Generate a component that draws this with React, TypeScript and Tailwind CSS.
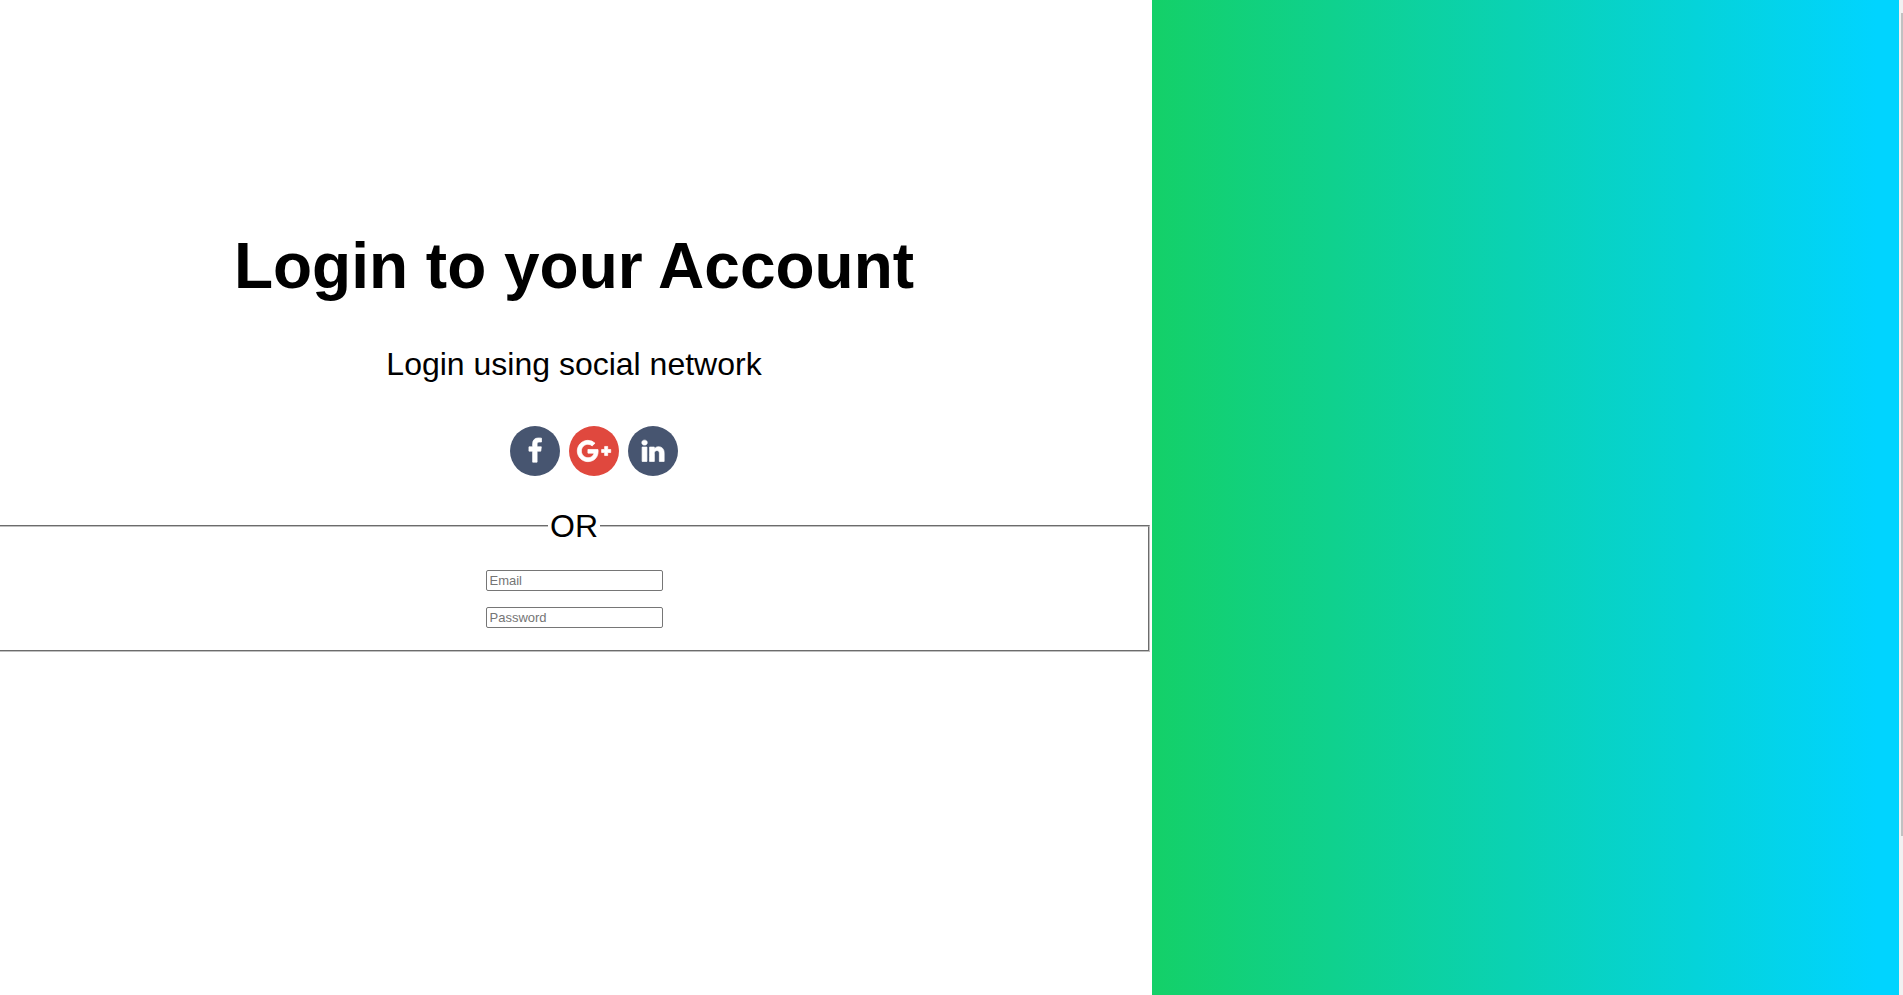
const inputClass =
  'h-[21px] w-[177px] rounded-[2px] border border-[#767676] bg-white px-[3px] text-[13px] text-black placeholder:text-[#757575]';

const socialClass = 'flex size-[50px] items-center justify-center rounded-full text-white';

const iconClass = 'h-[26px] fill-current stroke-current stroke-[50]';

function FacebookIcon() {
  return (
    <svg viewBox="0 0 1792 1792" className={`${iconClass} w-[26px] overflow-visible`} aria-hidden="true">
      <path d="M1343 12v264h-157q-86 0-116 36t-30 108v189h293l-39 296h-254v759h-306v-759h-255v-296h255v-218q0-186 104-288.5t277-102.5q147 0 228 12z" />
    </svg>
  );
}

function GooglePlusIcon() {
  return (
    <svg viewBox="0 0 2304 1792" className={`${iconClass} w-[34px] overflow-visible`} aria-hidden="true">
      <path d="M1437 913q0 208-87 370.5t-248 254-369 91.5q-149 0-285-58t-234-156-156-234-58-285 58-285 156-234 234-156 285-58q286 0 491 192l-199 191q-117-113-292-113-123 0-227.5 62t-165.5 168.5-61 232.5 61 232.5 165.5 168.5 227.5 62q83 0 152.5-23t114.5-57.5 78.5-78.5 49-83 21.5-74h-416v-252h692q12 63 12 122zm867-122v210h-209v209h-210v-209h-209v-210h209v-209h210v209h209z" />
    </svg>
  );
}

function LinkedInIcon() {
  return (
    <svg viewBox="0 0 1792 1792" className={`${iconClass} w-[26px] overflow-visible`} aria-hidden="true">
      <path d="M477 625v991h-330v-991h330zm21-306q1 73-50.5 122t-135.5 49h-2q-82 0-132-49t-50-122q0-74 51.5-122.5t134.5-48.5 133 48.5 51 122.5zm1166 729v568h-329v-530q0-105-40.5-164.5t-126.5-59.5q-63 0-105.5 34.5t-63.5 85.5q-11 30-11 81v553h-329q2-399 2-647t-1-296l-1-48h329v144h-2q20-32 41-56t56.5-52 87-43.5 114.5-15.5q171 0 275 113.5t104 332.5z" />
    </svg>
  );
}

export default function App() {
  return (
    <div className="grid min-h-screen grid-cols-[1152fr_747fr_4px] bg-white font-['Liberation_Sans',Arial,sans-serif] text-black">
      <main className="flex min-w-0 flex-col items-center pt-[229px]">
        <h1 className="pr-1 text-[64px] leading-[74px] font-bold">Login to your Account</h1>
        <p className="mt-[43px] pr-1 text-[32px] leading-[36px]">Login using social network</p>
        <div className="mt-11 flex gap-[9px] pl-9">
          <a href="#facebook" aria-label="Facebook" className={`${socialClass} bg-[#475570]`}>
            <FacebookIcon />
          </a>
          <a href="#google" aria-label="Google Plus" className={`${socialClass} bg-[#e0483e]`}>
            <GooglePlusIcon />
          </a>
          <a href="#linkedin" aria-label="LinkedIn" className={`${socialClass} bg-[#475570]`}>
            <LinkedInIcon />
          </a>
        </div>
        <form className="mt-8 w-full pr-[2px]">
          <fieldset className="w-full border-2 border-l-0 border-[#c0c0c0] [border-style:groove] pb-[22px]">
            <legend className="mx-auto px-[2px] text-[32px] leading-[36px]">OR</legend>
            <div className="flex flex-col items-center gap-4 pt-[26px]">
              <input type="email" aria-label="Email" placeholder="Email" className={inputClass} />
              <input type="password" aria-label="Password" placeholder="Password" className={inputClass} />
            </div>
          </fieldset>
        </form>
      </main>
      <aside className="bg-[linear-gradient(90deg,#14d068_0%,#00d4ff_97%)]" />
      <div className="bg-[#f1f1f1] pt-[13px] pl-[2px]">
        <div className="h-[823px] bg-[#c1c1c1]" />
      </div>
    </div>
  );
}
